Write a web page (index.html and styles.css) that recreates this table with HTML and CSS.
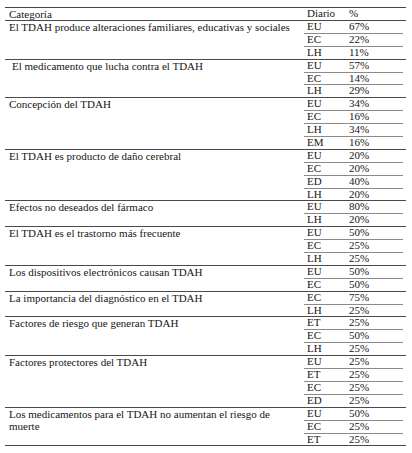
FILE: index.html
```html
<!DOCTYPE html>
<html lang="es">
<head>
<meta charset="utf-8">
<title>Tabla TDAH</title>
<link rel="stylesheet" href="styles.css">
</head>
<body>
<div class="table">
  <div class="group head">
    <div class="cat">Categoría</div>
    <div class="vals">
      <div class="row"><span class="d">Diario</span><span class="p">%</span></div>
    </div>
  </div>

  <div class="group">
    <div class="cat">El TDAH produce alteraciones familiares, educativas y sociales</div>
    <div class="vals">
      <div class="row"><span class="d">EU</span><span class="p">67%</span></div>
      <div class="row"><span class="d">EC</span><span class="p">22%</span></div>
      <div class="row"><span class="d">LH</span><span class="p">11%</span></div>
    </div>
  </div>

  <div class="group">
    <div class="cat indent">El medicamento que lucha contra el TDAH</div>
    <div class="vals">
      <div class="row"><span class="d">EU</span><span class="p">57%</span></div>
      <div class="row"><span class="d">EC</span><span class="p">14%</span></div>
      <div class="row"><span class="d">LH</span><span class="p">29%</span></div>
    </div>
  </div>

  <div class="group">
    <div class="cat">Concepción del TDAH</div>
    <div class="vals">
      <div class="row"><span class="d">EU</span><span class="p">34%</span></div>
      <div class="row"><span class="d">EC</span><span class="p">16%</span></div>
      <div class="row"><span class="d">LH</span><span class="p">34%</span></div>
      <div class="row"><span class="d">EM</span><span class="p">16%</span></div>
    </div>
  </div>

  <div class="group">
    <div class="cat">El TDAH es producto de daño cerebral</div>
    <div class="vals">
      <div class="row"><span class="d">EU</span><span class="p">20%</span></div>
      <div class="row"><span class="d">EC</span><span class="p">20%</span></div>
      <div class="row"><span class="d">ED</span><span class="p">40%</span></div>
      <div class="row"><span class="d">LH</span><span class="p">20%</span></div>
    </div>
  </div>

  <div class="group">
    <div class="cat">Efectos no deseados del fármaco</div>
    <div class="vals">
      <div class="row"><span class="d">EU</span><span class="p">80%</span></div>
      <div class="row"><span class="d">LH</span><span class="p">20%</span></div>
    </div>
  </div>

  <div class="group">
    <div class="cat">El TDAH es el trastorno más frecuente</div>
    <div class="vals">
      <div class="row"><span class="d">EU</span><span class="p">50%</span></div>
      <div class="row"><span class="d">EC</span><span class="p">25%</span></div>
      <div class="row"><span class="d">LH</span><span class="p">25%</span></div>
    </div>
  </div>

  <div class="group">
    <div class="cat">Los dispositivos electrónicos causan TDAH</div>
    <div class="vals">
      <div class="row"><span class="d">EU</span><span class="p">50%</span></div>
      <div class="row"><span class="d">EC</span><span class="p">50%</span></div>
    </div>
  </div>

  <div class="group">
    <div class="cat">La importancia del diagnóstico en el TDAH</div>
    <div class="vals">
      <div class="row"><span class="d">EC</span><span class="p">75%</span></div>
      <div class="row"><span class="d">LH</span><span class="p">25%</span></div>
    </div>
  </div>

  <div class="group">
    <div class="cat">Factores de riesgo que generan TDAH</div>
    <div class="vals">
      <div class="row"><span class="d">ET</span><span class="p">25%</span></div>
      <div class="row"><span class="d">EC</span><span class="p">50%</span></div>
      <div class="row"><span class="d">LH</span><span class="p">25%</span></div>
    </div>
  </div>

  <div class="group">
    <div class="cat">Factores protectores del TDAH</div>
    <div class="vals">
      <div class="row"><span class="d">EU</span><span class="p">25%</span></div>
      <div class="row"><span class="d">ET</span><span class="p">25%</span></div>
      <div class="row"><span class="d">EC</span><span class="p">25%</span></div>
      <div class="row"><span class="d">ED</span><span class="p">25%</span></div>
    </div>
  </div>

  <div class="group">
    <div class="cat">Los medicamentos para el TDAH no aumentan el riesgo de muerte</div>
    <div class="vals">
      <div class="row"><span class="d">EU</span><span class="p">50%</span></div>
      <div class="row"><span class="d">EC</span><span class="p">25%</span></div>
      <div class="row"><span class="d">ET</span><span class="p">25%</span></div>
    </div>
  </div>
</div>
</body>
</html>
```

FILE: styles.css
```css
html,
body {
  margin: 0;
  padding: 0;
  background: #ffffff;
}

body {
  padding: 7px 6px 0 5px;
}

.table {
  width: 401px;
  border-top: 1px solid #444444;
  font-family: "Liberation Serif", serif;
  font-size: 11px;
  color: #161616;
}

.group {
  display: flex;
  border-bottom: 1px solid #4a4a4a;
}

.cat {
  flex: 0 0 auto;
  width: 286px;
  padding-left: 4px;
  padding-right: 9px;
  line-height: 12px;
}

.cat.indent {
  padding-left: 7px;
  width: 283px;
}

.vals {
  flex: 1;
  display: flex;
  flex-direction: column;
}

.row {
  display: flex;
  height: 11.9px;
  line-height: 11.9px;
  margin-right: 3px;
  border-bottom: 1px solid #8a8a8a;
}

.row:last-child {
  border-bottom: none;
}

.d {
  width: 42px;
  padding-left: 3px;
}

.p {
  flex: 1;
}
```
